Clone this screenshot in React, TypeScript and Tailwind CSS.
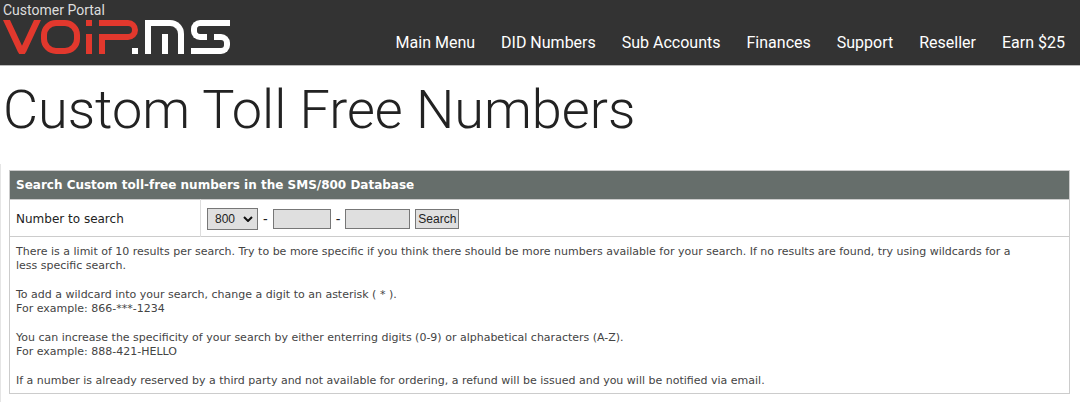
const navItems = ["Main Menu", "DID Numbers", "Sub Accounts", "Finances", "Support", "Reseller", "Earn $25"]

function Logo() {
  return (
    <div role="img" aria-label="VoIP.ms" className="flex h-[34px] items-stretch">
      <div className="relative w-[38px]">
        <span className="absolute inset-y-0 left-0 w-[7px] origin-top skew-x-[25deg] rounded-b-xs bg-[#e2382d]" />
        <span className="absolute inset-y-0 right-0 w-[7px] origin-top -skew-x-[25deg] rounded-b-xs bg-[#e2382d]" />
      </div>
      <div className="w-[39px] rounded-[15px] border-[6px] border-[#e2382d]" />
      <div className="ml-[6px] flex w-[6px] flex-col justify-between">
        <span className="h-[6px] bg-[#e2382d]" />
        <span className="h-[20px] bg-[#e2382d]" />
      </div>
      <div className="ml-[7px] w-[39px]">
        <div className="h-[20px] rounded-r-[10px] border-y-[6px] border-r-[6px] border-[#e2382d]" />
        <div className="h-[14px] w-[6px] bg-[#e2382d]" />
      </div>
      <div className="-ml-[6px] size-[6px] self-end bg-white" />
      <div className="ml-[7px] flex w-[39px] justify-center rounded-tr-[14px] border-x-[6px] border-t-[6px] border-white">
        <span className="h-[20px] w-[6px] self-end bg-white" />
      </div>
      <div className="ml-[7px] w-[39px]">
        <div className="flex h-[20px]">
          <span className="w-[16px] rounded-l-[9px] border-y-[6px] border-l-[6px] border-white" />
          <span className="flex-1 border-t-[6px] border-white" />
        </div>
        <div className="-mt-[6px] flex h-[20px]">
          <span className="flex-1 border-b-[6px] border-white" />
          <span className="w-[16px] rounded-r-[9px] border-y-[6px] border-r-[6px] border-white" />
        </div>
      </div>
    </div>
  )
}

export default function App() {
  return (
    <div className="bg-white font-['DejaVu_Sans',sans-serif] text-[#222]">
      <header className="flex justify-between border-b border-[#bbb] bg-[#333] font-['Roboto',sans-serif]">
        <div className="pb-[11px] pl-[3px]">
          <div className="text-sm leading-[20px] text-[#ddd]">Customer Portal</div>
          <Logo />
        </div>
        <nav className="flex items-center gap-[26px] pt-5 pr-[15px] text-base text-white">
          {navItems.map((item) => (
            <a key={item} href="#">
              {item}
            </a>
          ))}
        </nav>
      </header>

      <h1 className="pt-[10px] pb-5 pl-[3px] font-['Roboto',sans-serif] text-[54px] leading-[68px] font-light">
        Custom Toll Free Numbers
      </h1>

      <main className="border-l border-[#e5e5e5] pt-[6px] pr-[10px] pb-2 pl-2">
        <table className="w-full border-collapse border border-[#ccc] text-left">
          <thead>
            <tr>
              <th colSpan={2} className="h-[29px] bg-[#666e6b] px-[6px] text-xs font-bold text-white">
                Search Custom toll-free numbers in the SMS/800 Database
              </th>
            </tr>
          </thead>
          <tbody>
            <tr className="border-y border-[#ccc]">
              <td className="w-[191px] border-r border-[#ddd] px-[6px] pt-[2px] text-xs">
                <label htmlFor="prefix">Number to search</label>
              </td>
              <td className="h-[37px] px-[6px] pt-px">
                <form className="flex items-center gap-[5px] font-['Liberation_Sans',sans-serif] text-xs">
                  <div className="relative">
                    <select
                      id="prefix"
                      className="block h-[22px] w-[51px] appearance-none border border-[#777] bg-[#dfdfdf] pl-[7px]"
                    >
                      <option>800</option>
                    </select>
                    <svg
                      viewBox="0 0 10 6"
                      className="pointer-events-none absolute top-2 right-[5px] h-[6px] w-[10px] fill-none stroke-[#111] stroke-2"
                    >
                      <path d="M1 1l4 4 4-4" />
                    </svg>
                  </div>
                  <span className="text-sm">-</span>
                  <input aria-label="Exchange" className="h-5 w-[58px] border border-[#777] bg-[#dfdfdf] px-1" />
                  <span className="text-sm">-</span>
                  <input aria-label="Line number" className="h-5 w-[65px] border border-[#777] bg-[#dfdfdf] px-1" />
                  <button type="button" className="h-5 border border-[#777] bg-[#dfdfdf] px-[2px] leading-[18px]">
                    Search
                  </button>
                </form>
              </td>
            </tr>
            <tr>
              <td colSpan={2} className="pt-2 pr-6 pb-[5px] pl-[6px] text-[11px] leading-[14px] text-[#444]">
                <p>
                  There is a limit of 10 results per search. Try to be more specific if you think there should be more
                  numbers available for your search. If no results are found, try using wildcards for a
                  <br />
                  less specific search.
                </p>
                <p className="mt-[15px]">
                  To add a wildcard into your search, change a digit to an asterisk ( * ).
                  <br />
                  For example: 866-***-1234
                </p>
                <p className="mt-[15px]">
                  You can increase the specificity of your search by either enterring digits (0-9) or alphabetical
                  characters (A-Z).
                  <br />
                  For example: 888-421-HELLO
                </p>
                <p className="mt-[15px]">
                  If a number is already reserved by a third party and not available for ordering, a refund will be
                  issued and you will be notified via email.
                </p>
              </td>
            </tr>
          </tbody>
        </table>
      </main>
    </div>
  )
}
